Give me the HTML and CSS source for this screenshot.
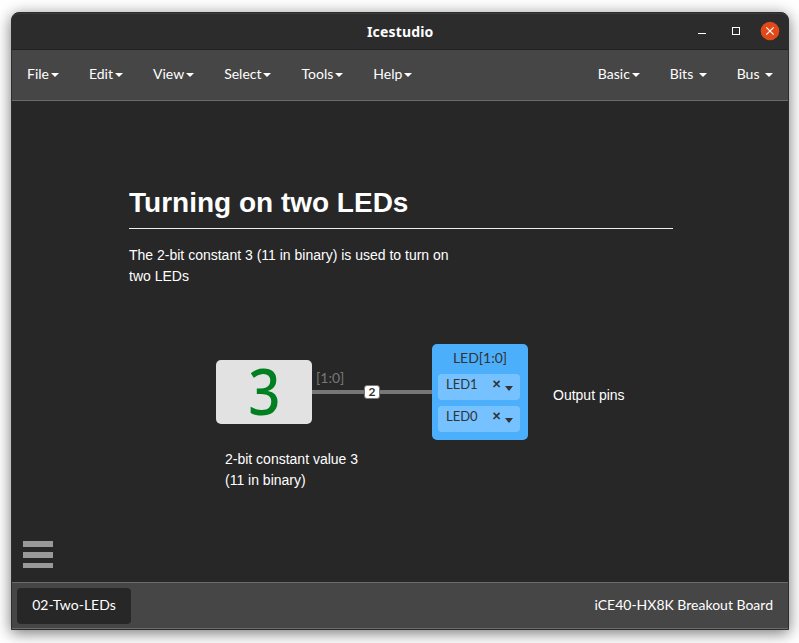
FILE: index.html
```html
<!DOCTYPE html>
<html lang="en">
<head>
<meta charset="utf-8">
<title>Icestudio</title>
<link rel="stylesheet" href="styles.css">
</head>
<body>
<div class="window">
  <header class="titlebar">
    <span class="title">Icestudio</span>
    <svg class="controls" width="92" height="22" viewBox="0 0 92 22">
      <path d="M8 13.5h8" stroke="#fff"/>
      <rect x="42.5" y="7.5" width="7" height="7" fill="none" stroke="#fff"/>
      <circle cx="80" cy="11" r="9.3" fill="#e04a1a"/>
      <path d="M76.3 7.3l7.4 7.4M83.7 7.3l-7.4 7.4" stroke="#fff" stroke-width="1.2"/>
    </svg>
  </header>
  <nav class="menubar">
    <ul class="menu">
      <li>File<i class="caret"></i></li>
      <li>Edit<i class="caret"></i></li>
      <li>View<i class="caret"></i></li>
      <li>Select<i class="caret caret-tight"></i></li>
      <li>Tools<i class="caret"></i></li>
      <li>Help<i class="caret"></i></li>
    </ul>
    <ul class="menu menu-right">
      <li>Basic<i class="caret caret-near"></i></li>
      <li>Bits<i class="caret caret-far"></i></li>
      <li>Bus<i class="caret caret-far"></i></li>
    </ul>
  </nav>
  <main class="canvas">
    <section class="note intro">
      <h1>Turning on two LEDs</h1>
      <p>The 2-bit constant 3 (11 in binary) is used to turn on two LEDs</p>
    </section>
    <div class="wire"></div>
    <span class="wire-size">2</span>
    <div class="constant"><span class="digit">3</span></div>
    <span class="port-label">[1:0]</span>
    <div class="output">
      <div class="output-name">LED[1:0]</div>
      <div class="pin"><span class="pin-name">LED1</span><span class="clear">×</span><i class="caret pin-caret"></i></div>
      <div class="pin"><span class="pin-name">LED0</span><span class="clear">×</span><i class="caret pin-caret"></i></div>
    </div>
    <p class="note constant-note">2-bit constant value 3<br>(11 in binary)</p>
    <p class="note output-note">Output pins</p>
    <div class="burger"><i></i><i></i><i></i></div>
  </main>
  <footer class="footer">
    <span class="tab">02-Two-LEDs</span>
    <span class="board">iCE40-HX8K Breakout Board</span>
  </footer>
</div>
</body>
</html>
```
FILE: styles.css
```css
* { box-sizing: border-box; }
body {
  margin: 0;
  height: 643px;
  padding: 12px 10px 13px 11px;
  overflow: hidden;
  background: #fff;
  color: #fff;
  font-family: Lato, sans-serif;
  font-size: 14px;
}
.window {
  height: 618px;
  display: flex;
  flex-direction: column;
  border: 1px solid #2d2d2d;
  border-radius: 8px 8px 0 0;
  background: #272727;
  box-shadow: 0 3px 15px rgba(0, 0, 0, .55);
}
.titlebar {
  height: 37px;
  display: flex;
  align-items: center;
  justify-content: space-between;
  padding: 0 6px 2px 355px;
  background: #2c2c2c;
  border-top: 1px solid #3a3a3a;
  border-bottom: 1px solid #222;
  border-radius: 7px 7px 0 0;
}
.title { padding-top: 3px; font: bold 14px/20px "Noto Sans", sans-serif; letter-spacing: .15px; }
.menubar {
  height: 51px;
  display: flex;
  justify-content: space-between;
  padding: 0 15px;
  background: #464646;
  border-bottom: 1px solid #6b6b6b;
}
.menu {
  display: flex;
  gap: 30px;
  margin: 0;
  padding: 0;
  list-style: none;
  line-height: 46px;
}
.menu li { display: flex; align-items: center; height: 47px; }
.caret {
  margin: 3px 0 0 2px;
  border: 4px solid transparent;
  border-top-color: currentColor;
  border-bottom: 0;
}
.caret-tight { margin-left: 1px; margin-right: 1px; }
.caret-near { margin-left: 2px; }
.caret-far { margin-left: 5.5px; }
.menu-right { gap: 30px; }
.canvas {
  position: relative;
  flex: 1;
  background: #272727;
}
.note {
  position: absolute;
  margin: 0;
  font: 14px/21px "Liberation Sans", sans-serif;
}
.intro { left: 117px; top: 84px; width: 544px; }
.intro h1 {
  margin: 0 0 16px;
  height: 44px;
  border-bottom: 1px solid #eee;
  font-size: 28px;
  line-height: 35px;
}
.intro p { margin: 0; width: 330px; }
.constant {
  position: absolute;
  left: 204px;
  top: 259px;
  width: 96px;
  height: 64px;
  padding-left: 1px;
  border-radius: 5px;
  background: #e2e2e2;
  color: #008020;
  font: 500 64px/62px "Noto Sans", sans-serif;
  text-align: center;
}
.digit { display: inline-block; transform: scaleX(.88); }
.port-label { position: absolute; left: 304px; top: 268px; color: #777; line-height: 17px; }
.wire { position: absolute; left: 300px; top: 289px; width: 120px; height: 4px; background: #777; }
.wire-size {
  position: absolute;
  left: 352px;
  top: 284px;
  width: 16px;
  height: 14px;
  border: 1px solid #777;
  border-radius: 3px;
  background: #fff;
  color: #333;
  font: bold 12px/12px Lato, sans-serif;
  text-align: center;
}
.output {
  position: absolute;
  left: 420px;
  top: 243px;
  width: 96px;
  height: 96px;
  padding: 0 8px 0 6px;
  border-radius: 5px;
  background: #4caffc;
  color: #333;
}
.output-name { height: 30px; padding-left: 2px; line-height: 28px; text-align: center; }
.pin {
  display: flex;
  height: 26px;
  margin-bottom: 6px;
  padding: 0 7px 0 8px;
  border-radius: 4px;
  background: #76c1ff;
  line-height: 20px;
}
.pin-name { flex: 1; font-size: 13px; }
.clear { font: 900 15px/19px Lato, sans-serif; }
.pin-caret { margin: 12px 0 0 4px; height: 5px; border-top-width: 5px; }
.constant-note { left: 213px; top: 348px; }
.output-note { left: 541px; top: 284px; }
.burger { position: absolute; left: 11px; top: 440px; width: 30px; display: grid; gap: 5px; }
.burger i { height: 6px; background: #999; }
.burger i:last-child { height: 5px; }
.footer {
  height: 47px;
  display: flex;
  justify-content: space-between;
  align-items: flex-start;
  padding: 5px 15px 0 5px;
  background: #464646;
  border-top: 1px solid #6b6b6b;
  border-bottom: 1px solid #6b6b6b;
  line-height: 33px;
}
.tab { width: 114px; height: 36px; border-radius: 4px; background: #272727; text-align: center; }
```
